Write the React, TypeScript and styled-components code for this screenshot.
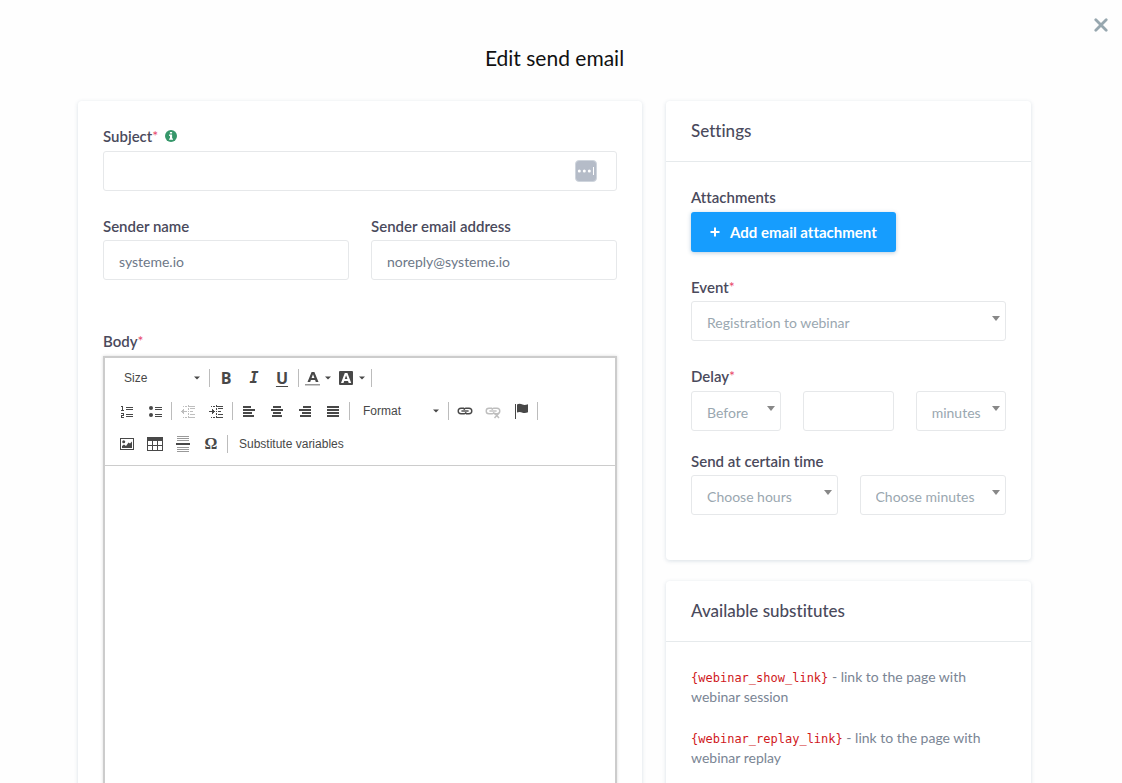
import React from "react";
import styled, { createGlobalStyle } from "styled-components";

const GlobalStyle = createGlobalStyle`
  *, *::before, *::after { box-sizing: border-box; }
  body {
    margin: 0;
    background: #fff;
    font-family: Lato, "Open Sans", sans-serif;
    font-variant-ligatures: none;
  }
  button, input, select, textarea { font-family: inherit; font-variant-ligatures: none; }
`;

const Modal = styled.div`
  position: relative;
  height: 100vh;
  overflow-y: auto;
  scrollbar-width: none;
  background: #fefefe;
  padding: 44px 91px 0 78px;
`;

const CloseButton = styled.button`
  position: absolute;
  top: 12px;
  right: 8px;
  width: 26px;
  height: 26px;
  padding: 6px;
  border: 0;
  background: none;
  svg { display: block; }
`;

const Title = styled.h1`
  margin: 0 0 29px;
  font-size: 21px;
  line-height: 28px;
  font-weight: 400;
  text-align: center;
  color: #111;
`;

const Columns = styled.div`
  display: grid;
  grid-template-columns: minmax(0, 17fr) minmax(0, 11fr);
  gap: 24px;
  align-items: start;
`;

const Side = styled.aside`
  display: flex;
  flex-direction: column;
  gap: 21px;
`;

const Card = styled.section`
  background: #fff;
  border-radius: 4px;
  box-shadow: 0 1px 4px rgba(50, 90, 120, 0.18);
`;

const CardHeader = styled.h2`
  margin: 0;
  padding: 0 25px;
  font-size: 17px;
  line-height: 60px;
  font-weight: 500;
  color: #4a4a5c;
  border-bottom: 1px solid #e6eaec;
`;

const CardBody = styled.div<{ $bottom?: number }>`
  padding: 25px 25px ${(p) => p.$bottom ?? 25}px;
`;

const Field = styled.div<{ $after?: number; $gap?: number }>`
  display: flex;
  flex-direction: column;
  align-items: stretch;
  gap: ${(p) => p.$gap ?? 5}px;
  min-width: 0;
  margin-bottom: ${(p) => p.$after ?? 0}px;
`;

const Row = styled.div<{ $after?: number }>`
  display: grid;
  grid-auto-flow: column;
  grid-auto-columns: minmax(0, 1fr);
  gap: 22px;
  margin-bottom: ${(p) => p.$after ?? 0}px;
`;

const Label = styled.label`
  display: flex;
  align-items: center;
  font-size: 15px;
  line-height: 20px;
  font-weight: 600;
  color: #4a4a5c;
`;

const Star = styled.span`
  color: #e8476a;
  font-size: 14px;
  font-weight: 400;
`;

const InfoIcon = styled.svg`
  margin-left: 7px;
`;

const TextInput = styled.input`
  width: 100%;
  height: 40px;
  padding: 3px 15px 0;
  border: 1px solid #e6e8ea;
  border-radius: 3px;
  background: #fff;
  font-size: 14px;
  color: #6d7888;
  outline: none;
`;

const InputWrap = styled.div`
  position: relative;
`;

const FillBadge = styled.svg`
  position: absolute;
  top: 9px;
  right: 20px;
`;

const SelectWrap = styled.div`
  position: relative;
  svg {
    position: absolute;
    top: 15px;
    right: 6px;
    pointer-events: none;
  }
`;

const SelectBox = styled.select`
  display: block;
  appearance: none;
  width: 100%;
  height: 40px;
  padding: 3px 15px 0;
  border: 1px solid #e6e8ea;
  border-radius: 3px;
  background: #fff;
  font-size: 14px;
  color: #9aa7b0;
  outline: none;
`;

const AddButton = styled.button`
  align-self: flex-start;
  display: flex;
  align-items: center;
  gap: 10px;
  height: 40px;
  padding: 0 19px;
  border: 0;
  border-radius: 3px;
  background: #169dfe;
  box-shadow: 0 1px 4px rgba(30, 90, 140, 0.3);
  color: #fff;
  font-size: 15px;
  font-weight: 700;
`;

const Note = styled.p`
  margin: 0 0 21px;
  font-size: 14px;
  line-height: 20px;
  color: #7a8594;
`;

const Code = styled.code`
  font-family: "DejaVu Sans Mono", "Liberation Mono", monospace;
  font-size: 12px;
  line-height: 16px;
  color: #d0181c;
`;

const Editor = styled.div`
  border: 2px solid #ccc;
  box-shadow: 0 0 3px rgba(0, 0, 0, 0.15);
  font-family: "Liberation Sans", Arial, sans-serif;
`;

const Toolbar = styled.div`
  display: flex;
  flex-direction: column;
  gap: 5px;
  padding: 6px 8px 7px;
  border-bottom: 1px solid #ccc;
`;

const ToolRow = styled.div`
  display: flex;
  align-items: center;
  height: 28px;
`;

const Tool = styled.button<{ $dim?: boolean }>`
  display: flex;
  align-items: center;
  gap: 2px;
  height: 28px;
  padding: 6px;
  border: 0;
  background: none;
  color: #484848;
  opacity: ${(p) => (p.$dim ? 0.35 : 1)};
`;

const ColorTool = styled(Tool)`
  padding: 6px 4px;
  gap: 4px;
  width: 34px;
`;

const Letter = styled.span<{ $kind?: "italic" | "under" | "omega" }>`
  width: 16px;
  text-align: center;
  font-size: ${(p) => (p.$kind === "italic" ? 15 : 16)}px;
  line-height: 16px;
  font-weight: 700;
  font-style: ${(p) => (p.$kind === "italic" ? "italic" : "normal")};
  font-family: ${(p) =>
    p.$kind === "italic"
      ? '"DejaVu Sans Mono", monospace'
      : p.$kind === "omega"
        ? '"Liberation Serif", serif'
        : '"Open Sans", sans-serif'};
  text-decoration: ${(p) => (p.$kind === "under" ? "underline" : "none")};
  text-decoration-thickness: 1px;
  text-underline-offset: 2px;
`;

const TextTool = styled(Tool)`
  padding: 0 9px;
  font-size: 12px;
`;

const Combo = styled(Tool)`
  width: 94px;
  justify-content: space-between;
  padding: 0 7px 0 11px;
  font-size: 12px;
`;

const Divider = styled.span`
  width: 1px;
  height: 18px;
  margin: 0 2px;
  background: #bcbcbc;
`;

const Canvas = styled.textarea`
  display: block;
  width: 100%;
  height: 400px;
  padding: 20px;
  border: 0;
  background: #fff;
  resize: none;
  outline: none;
`;

const Caret = () => (
  <svg width="6" height="4" viewBox="0 0 6 4" aria-hidden="true">
    <path d="M0 0.500h6L3 3.500z" fill="#484848" />
  </svg>
);

function Icon({ children, smooth }: { children: React.ReactNode; smooth?: boolean }) {
  return (
    <svg
      width="16"
      height="16"
      viewBox="0 0 16 16"
      fill="currentColor"
      shapeRendering={smooth ? "auto" : "crispEdges"}
      aria-hidden="true"
    >
      {children}
    </svg>
  );
}

function Bars({ rows }: { rows: [number, number][] }) {
  return (
    <Icon>
      {rows.map(([x, w], i) => (
        <rect key={i} x={x} y={3 + i * 3} width={w} height="2" />
      ))}
    </Icon>
  );
}

const indentLines = "M9 3h6v1H9zM10 5h5v1h-5zM10 8h3v1h-3zM10 11h5v1h-5zM9 14h6v1H9zM8 2h1v2H8zM8 5h1v2H8zM8 8h1v1H8zM8 10h1v2H8zM8 13h1v2H8zM3 3h1v1H3zM5 3h2v1H5zM3 14h1v1H3zM5 14h2v1H5z";

const ChainLink = () => (
  <g fill="none" stroke="currentColor" strokeWidth="1.4">
    <path d="M7 5.200H4a2.800 2.800 0 0 0 0 5.600h3.200a1.800 1.800 0 0 0 1.800-1.600" />
    <path d="M9 10.800h3a2.800 2.800 0 0 0 0-5.600H8.800A1.800 1.800 0 0 0 7 6.800" />
    <path d="M4.400 8h7.200" />
  </g>
);

function Dropdown({ label, id, text }: { label?: string; id: string; text: string }) {
  return (
    <SelectWrap>
      <SelectBox id={id} aria-label={label} defaultValue={text}>
        <option>{text}</option>
      </SelectBox>
      <svg width="8" height="5" viewBox="0 0 8 5" aria-hidden="true">
        <path d="M0 0h8L4 5z" fill="#888" />
      </svg>
    </SelectWrap>
  );
}

export default function App() {
  return (
    <>
      <GlobalStyle />
      <Modal role="dialog" aria-labelledby="dialog-title">
        <CloseButton aria-label="Close">
          <svg width="14" height="14" viewBox="0 0 14 14">
            <path d="M1.800 1.800l10.400 10.400M12.200 1.800L1.800 12.200" stroke="#97a7af" strokeWidth="2.800" strokeLinecap="round" />
          </svg>
        </CloseButton>
        <Title id="dialog-title">Edit send email</Title>
        <Columns>
          <Card>
            <CardBody>
              <Field $after={25}>
                <Label htmlFor="subject">
                  Subject<Star>*</Star>
                  <InfoIcon width="12" height="12" viewBox="0 0 12 12" aria-hidden="true">
                    <circle cx="6" cy="6" r="6" fill="#36976a" />
                    <path d="M4.900 1.900h2.200v1.700H4.900zM4.100 4.600h3v3.900h.9v1.300H4.100V8.500h.9V5.900h-.9z" fill="#fff" />
                  </InfoIcon>
                </Label>
                <InputWrap>
                  <TextInput id="subject" />
                  <FillBadge width="22" height="22" viewBox="0 0 22 22" aria-hidden="true">
                    <rect x="0.500" y="0.500" width="21" height="21" rx="3.500" fill="#b5bcc8" stroke="#cfd5dd" />
                    <circle cx="4.300" cy="11" r="1.500" fill="#fff" />
                    <circle cx="9.300" cy="11" r="1.500" fill="#fff" />
                    <circle cx="14.300" cy="11" r="1.500" fill="#fff" />
                    <path d="M18 7h1v8h-1z" fill="#fff" />
                  </FillBadge>
                </InputWrap>
              </Field>
              <Row $after={51}>
                <Field $gap={4}>
                  <Label htmlFor="sender-name">Sender name</Label>
                  <TextInput id="sender-name" defaultValue="systeme.io" />
                </Field>
                <Field $gap={4}>
                  <Label htmlFor="sender-email">Sender email address</Label>
                  <TextInput id="sender-email" defaultValue="noreply@systeme.io" />
                </Field>
              </Row>
              <Field>
                <Label htmlFor="body">
                  Body<Star>*</Star>
                </Label>
                <Editor>
                  <Toolbar>
                    <ToolRow>
                      <Combo>Size<Caret /></Combo>
                      <Divider />
                      <Tool aria-label="Bold"><Letter>B</Letter></Tool>
                      <Tool aria-label="Italic"><Letter $kind="italic">I</Letter></Tool>
                      <Tool aria-label="Underline"><Letter $kind="under">U</Letter></Tool>
                      <Divider />
                      <ColorTool aria-label="Text color">
                        <Icon smooth>
                          <path fillRule="evenodd" d="M2.500 12L6.600 2h2.800l4.100 10h-2.700l-.7-2H5.900l-.7 2zM6.600 8h2.800L8 4.200z" />
                          <path d="M0 14h15v1.500H0z" fill="#999" />
                        </Icon>
                        <Caret />
                      </ColorTool>
                      <ColorTool aria-label="Background color">
                        <Icon smooth>
                          <path fillRule="evenodd" d="M2 1h11a1 1 0 0 1 1 1v12a1 1 0 0 1-1 1H1a1 1 0 0 1-1-1V2a1 1 0 0 1 1-1zM2 13h2.500l.7-2h3.800l.7 2h2.500L8.400 3H5.800zM5.800 9h2.600L7.100 5.200z" />
                        </Icon>
                        <Caret />
                      </ColorTool>
                      <Divider />
                    </ToolRow>
                    <ToolRow>
                      <Tool aria-label="Numbered list">
                        <Icon>
                          <path d="M7 4h7v1H7zM7 6h7v1H7zM7 11h7v1H7zM7 13h7v1H7zM2 3h2v4H3V4H2zM2 7h3v1H2zM2 10h3v3H3v1h2v1H2v-3h2v-1H2z" />
                        </Icon>
                      </Tool>
                      <Tool aria-label="Bulleted list">
                        <Icon smooth>
                          <circle cx="4" cy="5" r="2" />
                          <circle cx="4" cy="12" r="2" />
                          <path d="M8 4h7v1H8zM8 6h7v1H8zM8 11h7v1H8zM8 13h7v1H8z" />
                        </Icon>
                      </Tool>
                      <Divider />
                      <Tool aria-label="Decrease indent" $dim>
                        <Icon>
                          <path d={indentLines} />
                          <path d="M1 8h6v1H1zM2 7h1v3H2zM3 6h1v5H3z" />
                        </Icon>
                      </Tool>
                      <Tool aria-label="Increase indent">
                        <Icon>
                          <path d={indentLines} />
                          <path d="M1 8h6v1H1zM5 7h1v3H5zM4 6h1v5H4z" />
                        </Icon>
                      </Tool>
                      <Divider />
                      <Tool aria-label="Align left"><Bars rows={[[2, 8], [2, 12], [2, 9], [2, 11]]} /></Tool>
                      <Tool aria-label="Center"><Bars rows={[[4, 8], [2, 12], [4, 8], [3, 10]]} /></Tool>
                      <Tool aria-label="Align right"><Bars rows={[[6, 8], [2, 12], [5, 9], [3, 11]]} /></Tool>
                      <Tool aria-label="Justify"><Bars rows={[[2, 12], [2, 12], [2, 12], [2, 12]]} /></Tool>
                      <Divider />
                      <Combo>Format<Caret /></Combo>
                      <Divider />
                      <Tool aria-label="Link"><Icon smooth><ChainLink /></Icon></Tool>
                      <Tool aria-label="Unlink" $dim>
                        <Icon smooth>
                          <ChainLink />
                          <path d="M9.500 10l4.500 5M14 10l-4.500 5" stroke="currentColor" strokeWidth="1.500" />
                        </Icon>
                      </Tool>
                      <Tool aria-label="Anchor">
                        <Icon smooth>
                          <path d="M2 1h1v15H2zM4 1.500c2-1.200 4-.6 5.500.1 1.500.6 3.500.4 5.500-.3v8c-2 1-4 1-5.500.4C8 9 6 8.500 4 9.500z" />
                        </Icon>
                      </Tool>
                      <Divider />
                    </ToolRow>
                    <ToolRow>
                      <Tool aria-label="Image">
                        <Icon smooth>
                          <path fillRule="evenodd" d="M1 2h14v12H1zM2 3v10h12V3z" />
                          <circle cx="4.700" cy="5.700" r="1.500" />
                          <path d="M3 12v-2l2-1.500 2 1.500 2.500-3.500 1.500 1L13 5.500V12z" />
                        </Icon>
                      </Tool>
                      <Tool aria-label="Table">
                        <Icon>
                          <path fillRule="evenodd" d="M0 1h16v14H0zM1 5v4h4V5zM6 5v4h4V5zM11 5v4h4V5zM1 10v4h4v-4zM6 10v4h4v-4zM11 10v4h4v-4z" />
                        </Icon>
                      </Tool>
                      <Tool aria-label="Horizontal line">
                        <Icon>
                          <path d="M2 0h12v1H2zM2 2h12v1H2zM2 4h12v1H2zM2 11h12v1H2zM2 13h12v1H2zM2 15h12v1H2z" fill="#999" />
                          <path d="M1 7h14v2H1z" />
                        </Icon>
                      </Tool>
                      <Tool aria-label="Special character"><Letter $kind="omega">Ω</Letter></Tool>
                      <Divider />
                      <TextTool>Substitute variables</TextTool>
                    </ToolRow>
                  </Toolbar>
                  <Canvas id="body" />
                </Editor>
              </Field>
            </CardBody>
          </Card>
          <Side>
            <Card>
              <CardHeader>Settings</CardHeader>
              <CardBody $bottom={45}>
                <Field $after={25}>
                  <Label as="span">Attachments</Label>
                  <AddButton>
                    <svg width="10" height="10" viewBox="0 0 10 10" aria-hidden="true">
                      <path d="M4 0.500h2V4h3.500v2H6v3.500H4V6H0.500V4H4z" fill="#fff" />
                    </svg>
                    Add email attachment
                  </AddButton>
                </Field>
                <Field $after={25} $gap={4}>
                  <Label htmlFor="event">Event<Star>*</Star></Label>
                  <Dropdown id="event" text="Registration to webinar" />
                </Field>
                <Field $after={20}>
                  <Label htmlFor="delay-direction">Delay<Star>*</Star></Label>
                  <Row>
                    <Dropdown id="delay-direction" text="Before" />
                    <TextInput aria-label="Delay amount" />
                    <Dropdown id="delay-unit" label="Delay unit" text="minutes" />
                  </Row>
                </Field>
                <Field $gap={4}>
                  <Label htmlFor="hours">Send at certain time</Label>
                  <Row>
                    <Dropdown id="hours" text="Choose hours" />
                    <Dropdown id="minutes" label="Minutes" text="Choose minutes" />
                  </Row>
                </Field>
              </CardBody>
            </Card>
            <Card>
              <CardHeader>Available substitutes</CardHeader>
              <CardBody>
                <Note><Code>{"{webinar_show_link}"}</Code> - link to the page with webinar session</Note>
                <Note><Code>{"{webinar_replay_link}"}</Code> - link to the page with webinar replay</Note>
              </CardBody>
            </Card>
          </Side>
        </Columns>
      </Modal>
    </>
  );
}
